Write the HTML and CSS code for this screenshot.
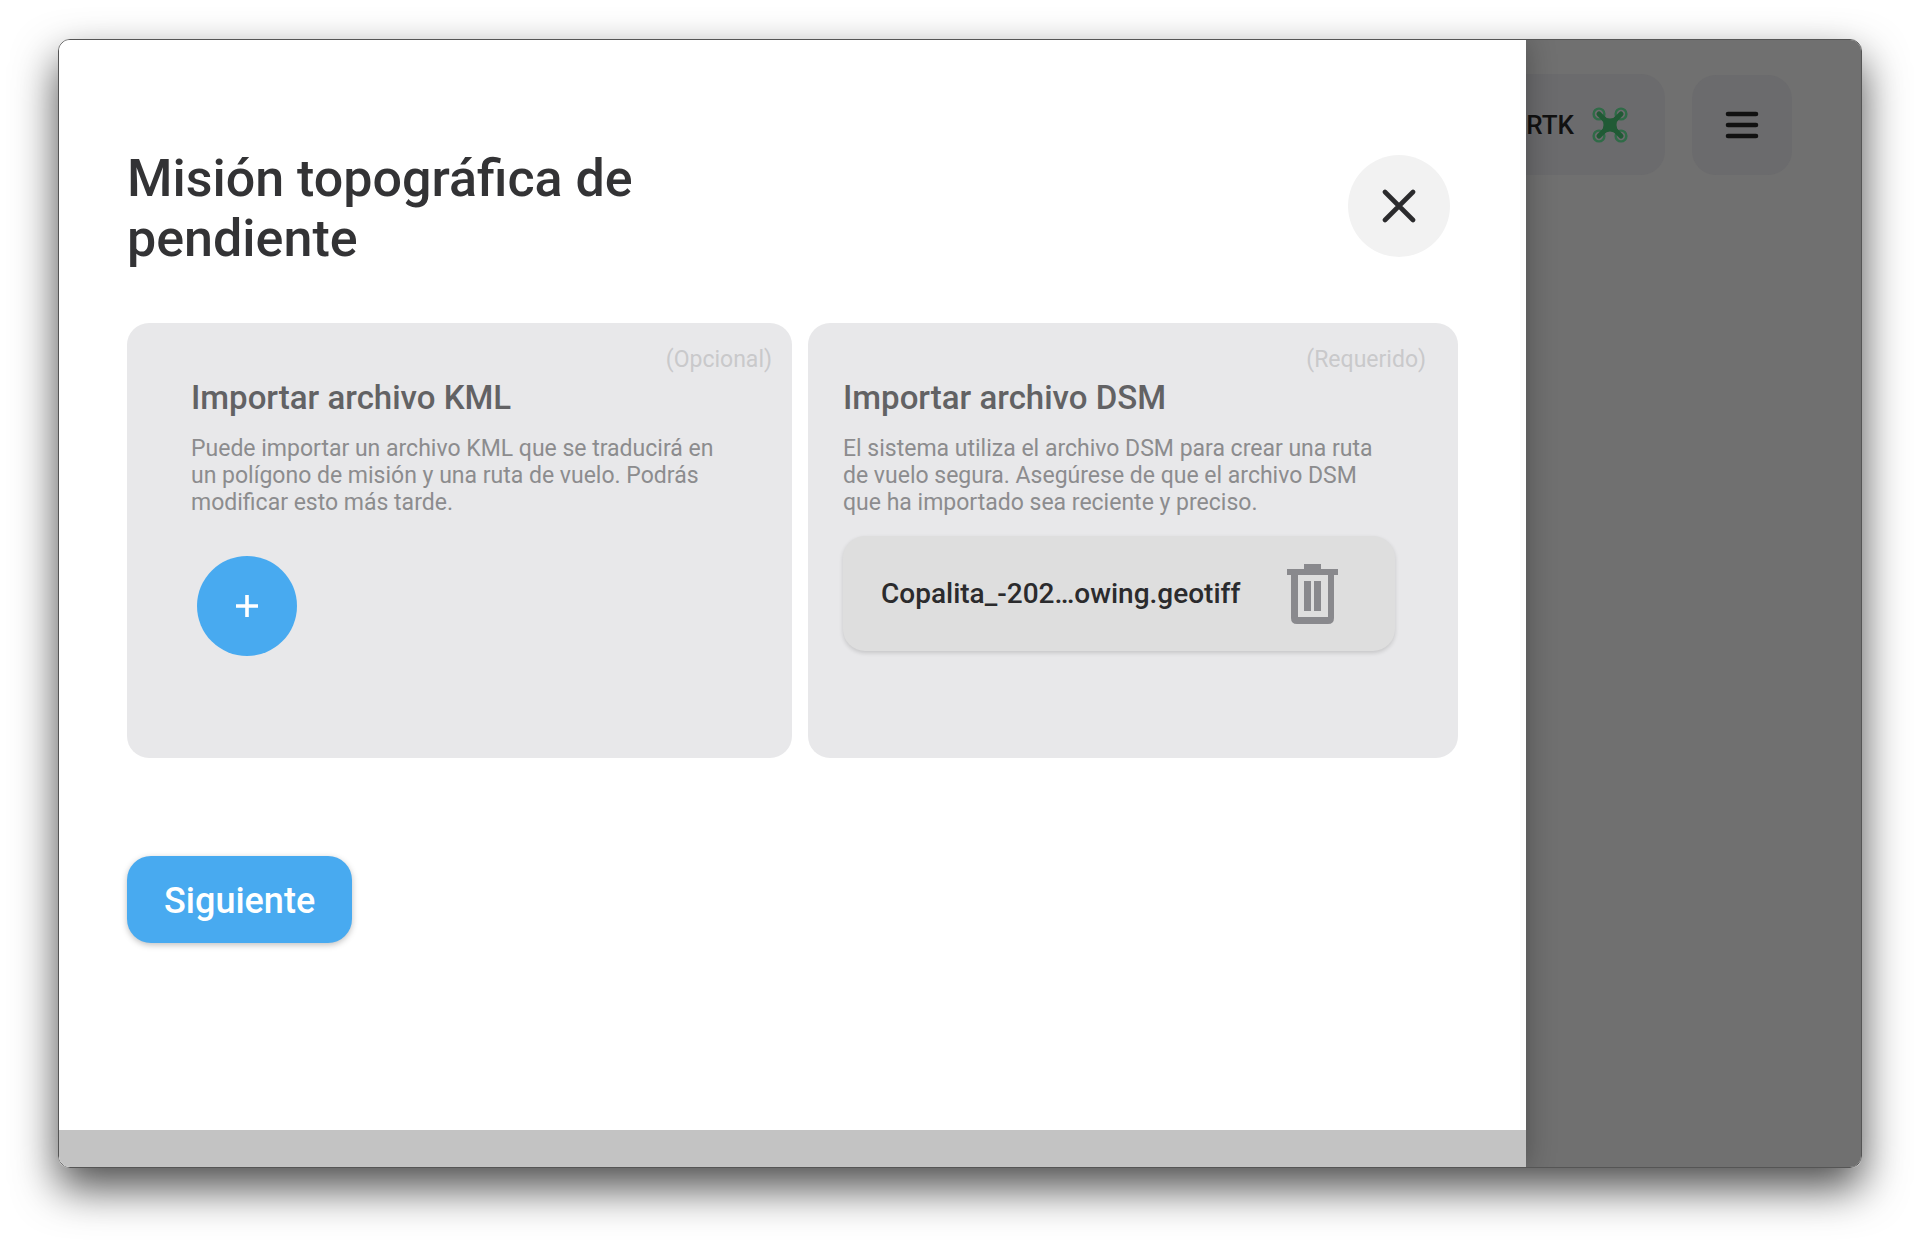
FILE: index.html
```html
<!DOCTYPE html>
<html lang="es">
<head>
<meta charset="utf-8">
<meta name="viewport" content="width=device-width, initial-scale=1">
<title>Misión topográfica de pendiente</title>
<link rel="stylesheet" href="styles.css">
</head>
<body>
<div class="window">
  <main class="drawer">
    <div class="drawer-body">
      <header class="drawer-header">
        <h1 class="title">Misión topográfica de pendiente</h1>
        <button class="close" type="button" aria-label="Cerrar">
          <svg width="34" height="34" viewBox="0 0 34 34" fill="none" stroke="#2b2b2d" stroke-width="4.6" stroke-linecap="round"><path d="M3 3 31 31M31 3 3 31"/></svg>
        </button>
      </header>

      <div class="cards">
        <section class="card card-kml">
          <p class="tag">(Opcional)</p>
          <h2 class="card-title">Importar archivo KML</h2>
          <p class="text">Puede importar un archivo KML que se traducirá en un polígono de misión y una ruta de vuelo. Podrás modificar esto más tarde.</p>
          <button class="add" type="button" aria-label="Añadir archivo KML">
            <svg width="24" height="24" viewBox="0 0 24 24" fill="none" stroke="#fff" stroke-width="3.6"><path d="M12 1V23M1 12H23"/></svg>
          </button>
        </section>

        <section class="card card-dsm">
          <p class="tag">(Requerido)</p>
          <h2 class="card-title">Importar archivo DSM</h2>
          <p class="text">El sistema utiliza el archivo DSM para crear una ruta de vuelo segura. Asegúrese de que el archivo DSM que ha importado sea reciente y preciso.</p>
          <div class="file">
            <span class="file-name">Copalita_-202…owing.geotiff</span>
            <button class="delete" type="button" aria-label="Eliminar archivo">
              <svg width="51" height="60" viewBox="0 0 51 60" fill="#89898d"><path d="M17 0H34V5H51V11H0V5H17Z"/><path fill-rule="evenodd" d="M4 9H47V54Q47 60 41 60H10Q4 60 4 54ZM11 11V53H41V11Z"/><path d="M17 17H24V47H17ZM27 17H34V47H27Z"/></svg>
            </button>
          </div>
        </section>
      </div>

      <button class="next" type="button">Siguiente</button>
    </div>
    <div class="drawer-footer"></div>
  </main>

  <aside class="backdrop">
    <div class="toolbar">
      <div class="status">
        <span>RTK</span>
        <svg width="36" height="36" viewBox="0 0 36 36" fill="none"><g stroke="#2f6b47" stroke-width="2.4"><circle cx="7" cy="7" r="5.4"/><circle cx="29" cy="7" r="5.4"/><circle cx="7" cy="29" r="5.4"/><circle cx="29" cy="29" r="5.4"/></g><path d="M7 7 29 29M29 7 7 29" stroke="#215a35" stroke-width="5" stroke-linecap="round"/><path d="M11 9Q18 14 25 9L27 11Q22 18 27 25L25 27Q18 22 11 27L9 25Q14 18 9 11Z" fill="#215a35"/></svg>
      </div>
      <button class="menu" type="button" aria-label="Menú">
        <svg width="34" height="28" viewBox="0 0 34 28" fill="none" stroke="#111" stroke-width="4.6" stroke-linecap="round"><path d="M3 3H31M3 14H31M3 25H31"/></svg>
      </button>
    </div>
  </aside>
</div>
</body>
</html>
```
FILE: styles.css
```css
* {
  box-sizing: border-box;
}

body {
  margin: 0;
  padding: 39px 58px 77px;
  background: #fff;
  font-family: Roboto, sans-serif;
  color: #333335;
}

h1, h2, p {
  margin: 0;
  font-weight: 500;
}

button {
  display: flex;
  flex: none;
  align-items: center;
  justify-content: center;
  padding: 0;
  border: 0;
  font: inherit;
  color: inherit;
  cursor: pointer;
}

.window {
  display: grid;
  grid-template-columns: minmax(0, 1467fr) minmax(0, 335fr);
  min-height: calc(100vh - 116px);
  border: 1px solid #555;
  border-radius: 12px;
  overflow: hidden;
  box-shadow: 0 20px 44px rgba(0, 0, 0, 0.7);
}

.drawer {
  position: relative;
  z-index: 1;
  display: flex;
  flex-direction: column;
  background: #fff;
  box-shadow: 0 0 28px rgba(0, 0, 0, 0.3);
}

.drawer-body {
  flex: 1;
  padding: 109px 68px 40px;
}

.drawer-footer {
  height: 37px;
  background: #c3c3c3;
}

.drawer-header {
  display: flex;
  align-items: center;
  justify-content: space-between;
  margin-bottom: 54px;
}

.title {
  max-width: 600px;
  font-size: 52px;
  line-height: 60px;
}

.close {
  width: 102px;
  height: 102px;
  margin: 0 8px 6px 0;
  border-radius: 50%;
  background: #f2f2f2;
}

.cards {
  display: grid;
  grid-template-columns: minmax(0, 665fr) minmax(0, 650fr);
  gap: 16px;
  margin-bottom: 98px;
}

.card {
  min-height: 435px;
  border-radius: 22px;
  background: #e8e8ea;
}

.card-kml {
  padding: 23px 20px 22px 64px;
}

.card-dsm {
  padding: 23px 32px 22px 35px;
}

.tag {
  margin-bottom: 5px;
  font-size: 23px;
  font-weight: 400;
  line-height: 28px;
  text-align: right;
  color: #c9c9cb;
}

.card-title {
  margin-bottom: 18px;
  font-size: 33px;
  line-height: 38px;
  color: #626264;
}

.text {
  max-width: 546px;
  font-size: 23px;
  font-weight: 400;
  line-height: 27px;
  color: #8c8c8e;
}

.add {
  width: 100px;
  height: 100px;
  margin: 40px 0 0 6px;
  border-radius: 50%;
  background: #48aaf0;
}

.file {
  display: flex;
  align-items: center;
  justify-content: space-between;
  max-width: 552px;
  height: 115px;
  margin-top: 20px;
  padding: 0 57px 0 38px;
  border-radius: 22px;
  background: #dedede;
  box-shadow: 0 2px 4px rgba(0, 0, 0, 0.15);
}

.file-name {
  font-size: 28px;
  font-weight: 500;
  line-height: 34px;
  color: #2b2b2d;
}

.delete {
  background: none;
}

.next {
  padding: 24px 37px 20px;
  border-radius: 24px;
  background: #48aaf0;
  box-shadow: 0 2px 6px rgba(0, 0, 0, 0.25);
  font-size: 36px;
  font-weight: 500;
  line-height: 43px;
  color: #fff;
}

.backdrop {
  overflow: hidden;
  background: #707070;
}

.toolbar {
  display: flex;
  align-items: center;
  justify-content: flex-end;
  gap: 27px;
  padding: 34px 69px 0 0;
}

.status {
  display: flex;
  flex: 1;
  align-items: center;
  justify-content: flex-end;
  gap: 18px;
  min-width: 0;
  height: 101px;
  padding-right: 37px;
  border-radius: 0 24px 24px 0;
  background: #6b6b6d;
  font-size: 26px;
  font-weight: 500;
  line-height: 30px;
  color: #111;
}

.status svg {
  flex: none;
}

.menu {
  width: 100px;
  height: 100px;
  border-radius: 24px;
  background: #6b6b6d;
}
```
